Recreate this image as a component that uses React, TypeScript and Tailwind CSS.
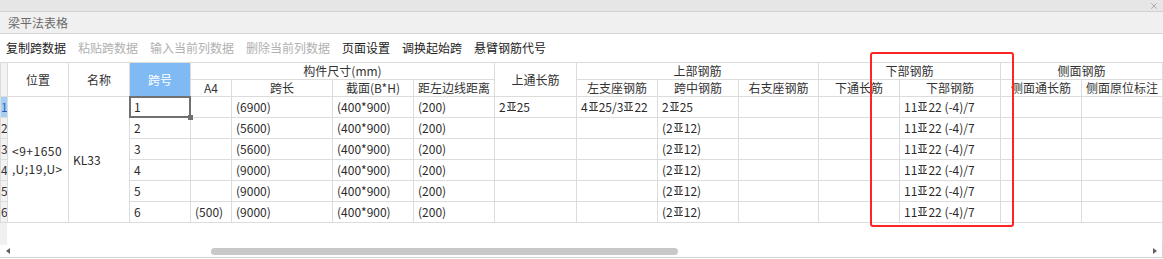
import { X } from 'lucide-react'

const font = { fontFamily: '"Noto Sans CJK SC", "Noto Sans", sans-serif' }

// 三级钢 symbol
function G() {
  return (
    <svg width="9" height="9" viewBox="0 0 9 9" className="inline-block align-top mt-[1px] mx-[1px]" fill="none" stroke="#333" strokeWidth="1">
      <path d="M0.5 0.5H8.5M3 0.5V8M6 0.5V8M0 8.5H9M0.8 3.5L2 5.8M8.2 3.5L7 5.8" />
    </svg>
  )
}

const widths = [7, 61, 61, 61, 41, 101, 81, 81, 82, 81, 81, 80, 81, 101, 81, 81]

const rows = [
  { no: '1', span: '(6900)', a4: '', top: <>2<G />25</>, left: <>4<G />25/3<G />22</>, mid: <>2<G />25</> },
  { no: '2', span: '(5600)', a4: '', top: null, left: null, mid: <>(2<G />12)</> },
  { no: '3', span: '(5600)', a4: '', top: null, left: null, mid: <>(2<G />12)</> },
  { no: '4', span: '(9000)', a4: '', top: null, left: null, mid: <>(2<G />12)</> },
  { no: '5', span: '(9000)', a4: '', top: null, left: null, mid: <>(2<G />12)</> },
  { no: '6', span: '(9000)', a4: '(500)', top: null, left: null, mid: <>(2<G />12)</> },
]

const th = 'border border-[#dcdcdc] font-normal text-[#333] text-center leading-none whitespace-nowrap overflow-hidden p-0'
const td = 'border border-[#dcdcdc] text-[#2b2b2b] leading-none whitespace-nowrap overflow-hidden pl-[4px] p-0 text-left'

export default function App() {
  return (
    <div className="relative w-[1163px] h-[259px] bg-white overflow-hidden text-[12px]" style={font}>
      {/* window strip */}
      <div className="h-[12px] bg-[#e6e6e6] border-b border-[#d2d2d2] flex justify-end items-center pr-[4px]">
        <X size={10} className="text-[#a0a0a0]" />
      </div>
      {/* title */}
      <div className="h-[22px] bg-[#f0f0f0] border-b border-[#d8d8d8] flex items-center pl-[8px] text-[#6a6a6a]">
        梁平法表格
      </div>
      {/* toolbar */}
      <div className="h-[28px] flex items-center pl-[6px] gap-[12px] text-[#222]">
        <span>复制跨数据</span>
        <span className="text-[#b0b0b0]">粘贴跨数据</span>
        <span className="text-[#b0b0b0]">输入当前列数据</span>
        <span className="text-[#b0b0b0]">删除当前列数据</span>
        <span>页面设置</span>
        <span>调换起始跨</span>
        <span>悬臂钢筋代号</span>
      </div>

      {/* grid */}
      <div className="h-[183px] border-r border-[#dcdcdc] w-[1163px] overflow-hidden">
        <table className="table-fixed border-collapse w-[1162px]">
          <colgroup>
            {widths.map((w, i) => (
              <col key={i} style={{ width: w }} />
            ))}
          </colgroup>
          <thead>
            <tr className="h-[17px]">
              <th rowSpan={2} className={th + ' bg-[#f2f2f2]'}></th>
              <th rowSpan={2} className={th}>位置</th>
              <th rowSpan={2} className={th}>名称</th>
              <th rowSpan={2} className={th + ' bg-[#80baf5] text-white'}>跨号</th>
              <th colSpan={4} className={th}>构件尺寸(mm)</th>
              <th rowSpan={2} className={th}>上通长筋</th>
              <th colSpan={3} className={th}>上部钢筋</th>
              <th colSpan={2} className={th}>下部钢筋</th>
              <th colSpan={2} className={th}>侧面钢筋</th>
            </tr>
            <tr className="h-[17px]">
              <th className={th}>A4</th>
              <th className={th}>跨长</th>
              <th className={th}>截面(B*H)</th>
              <th className={th}>距左边线距离</th>
              <th className={th}>左支座钢筋</th>
              <th className={th}>跨中钢筋</th>
              <th className={th}>右支座钢筋</th>
              <th className={th}>下通长筋</th>
              <th className={th}>下部钢筋</th>
              <th className={th}>侧面通长筋</th>
              <th className={th}>侧面原位标注</th>
            </tr>
          </thead>
          <tbody>
            {rows.map((r, i) => (
              <tr key={r.no} className="h-[21px]">
                <td className={'border border-[#dcdcdc] leading-none overflow-hidden p-0 text-left ' + (i === 0 ? 'bg-[#a6cff5] text-[#1d63b8]' : 'bg-[#f2f2f2] text-[#333]')}>
                  {r.no}
                </td>
                {i === 0 && (
                  <>
                    <td rowSpan={6} className="border border-[#dcdcdc] text-[#2b2b2b] leading-[18px] pl-[4px] p-0 text-left align-middle tracking-[0.5px]">
                      &lt;9+1650
                      <br />
                      ,U;19,U&gt;
                    </td>
                    <td rowSpan={6} className={td}>KL33</td>
                  </>
                )}
                <td className={td}>{r.no}</td>
                <td className={td}>{r.a4}</td>
                <td className={td}>{r.span}</td>
                <td className={td}>(400*900)</td>
                <td className={td}>(200)</td>
                <td className={td}>{r.top}</td>
                <td className={td}>{r.left}</td>
                <td className={td}>{r.mid}</td>
                <td className={td}></td>
                <td className={td}></td>
                <td className={td}>11<G />22 (-4)/7</td>
                <td className={td}></td>
                <td className={td}></td>
              </tr>
            ))}
          </tbody>
        </table>
        <div className="w-[7px] h-[22px] bg-[#f0f0f0]"></div>
      </div>

      {/* horizontal scrollbar */}
      <div className="h-[13px] border-b border-r border-[#d4d4d4] w-[1163px] flex items-center">
        <span className="ml-[6px] w-0 h-0 border-y-[3px] border-y-transparent border-r-[4px] border-r-[#606060]"></span>
        <div className="ml-[201px] w-[467px] h-[7px] rounded-full bg-[#c8c8c8]"></div>
        <span className="ml-auto mr-[5px] w-0 h-0 border-y-[3px] border-y-transparent border-l-[4px] border-l-[#606060]"></span>
      </div>

      {/* selected cell */}
      <div className="absolute left-[129px] top-[96px] w-[62px] h-[22px] border-2 border-[#707070] pointer-events-none">
        <div className="absolute -right-[4px] -bottom-[4px] w-[5px] h-[5px] bg-[#707070]"></div>
      </div>

      {/* annotation */}
      <div className="absolute left-[870px] top-[52px] w-[144px] h-[175px] border-2 border-[#ff2424] rounded-[3px] pointer-events-none"></div>
    </div>
  )
}
